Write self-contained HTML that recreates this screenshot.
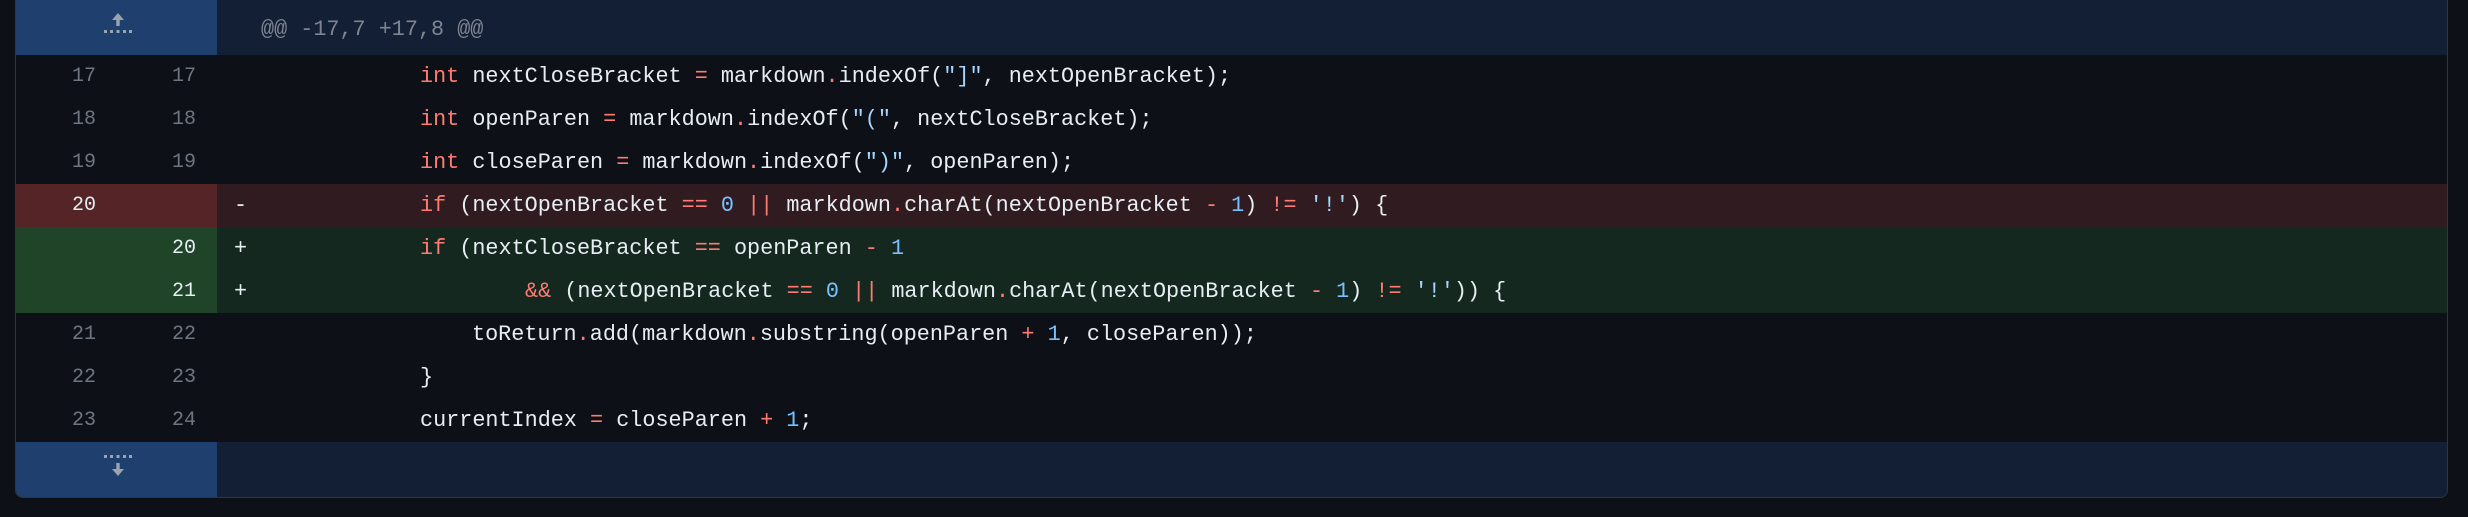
<!DOCTYPE html>
<html><head><meta charset="utf-8"><style>
html,body{margin:0;padding:0;background:#0d1117;width:2468px;height:517px;overflow:hidden}
.box{position:absolute;left:15px;top:-4px;width:2431px;height:501px;border:1px solid #30363d;border-top:none;border-radius:0 0 8px 8px;overflow:hidden;background:#0d1117}
.row{position:absolute;left:0;width:2431px;height:43px;font-family:"Liberation Mono",monospace;font-size:21.8px;line-height:43px;color:#e6edf3;white-space:pre}
.n{position:absolute;top:0;height:43px;text-align:right;color:#6e7681;font-size:20px}
.o{left:0;width:80px}.w{left:80px;width:100px}
.g{position:absolute;left:0;top:0;width:201px;height:100%}
.c{position:absolute;left:201px;top:0;right:0;height:100%}
.s{position:absolute;left:218px}
.t{position:absolute;left:404px}
.i4{left:456px}.i8{left:509px}
.k{color:#ff7b72}.m{color:#79c0ff}.q{color:#a5d6ff}
.del .g{background:#542426}.del .c{background:#301b20}
.add .g{background:#1f4428}.add .c{background:#15281f}
.del .n,.add .n{color:#e6edf3}
.hk{position:absolute;left:0;width:2431px}
.hk .g{background:#1f3f6e}.hk .c{background:#131f35}
</style></head><body>
<div class="box">
<div class="hk" style="top:0;height:59px"><div class="g">
<svg style="position:absolute;left:88px;top:15px" width="28" height="24" viewBox="0 0 28 24"><path d="M14 2 L8 9 H12.3 V15 H15.7 V9 H20 Z" fill="#9aa4b0"/><g fill="#9aa4b0"><rect x="0" y="19" width="3" height="3"/><rect x="6" y="19" width="3" height="3"/><rect x="12.5" y="19" width="3" height="3"/><rect x="19" y="19" width="3" height="3"/><rect x="25" y="19" width="3" height="3"/></g></svg>
</div><div class="c"><span style="position:absolute;left:44px;top:4px;line-height:59px;font-family:'Liberation Mono',monospace;font-size:21.8px;color:#7d8590">@@ -17,7 +17,8 @@</span></div></div>

<div class="row" style="top:59px"><div class="g"><span class="n o">17</span><span class="n w">17</span></div><div class="c"></div><span class="t"><span class="k">int</span> nextCloseBracket <span class="k">=</span> markdown<span class="k">.</span>indexOf(<span class="q">"]"</span>, nextOpenBracket);</span></div>
<div class="row" style="top:102px"><div class="g"><span class="n o">18</span><span class="n w">18</span></div><div class="c"></div><span class="t"><span class="k">int</span> openParen <span class="k">=</span> markdown<span class="k">.</span>indexOf(<span class="q">"("</span>, nextCloseBracket);</span></div>
<div class="row" style="top:145px"><div class="g"><span class="n o">19</span><span class="n w">19</span></div><div class="c"></div><span class="t"><span class="k">int</span> closeParen <span class="k">=</span> markdown<span class="k">.</span>indexOf(<span class="q">")"</span>, openParen);</span></div>
<div class="row del" style="top:188px"><div class="g"><span class="n o">20</span><span class="n w"></span></div><div class="c"></div><span class="s">-</span><span class="t"><span class="k">if</span> (nextOpenBracket <span class="k">==</span> <span class="m">0</span> <span class="k">||</span> markdown<span class="k">.</span>charAt(nextOpenBracket <span class="k">-</span> <span class="m">1</span>) <span class="k">!=</span> <span class="q">'!'</span>) {</span></div>
<div class="row add" style="top:231px"><div class="g"><span class="n o"></span><span class="n w">20</span></div><div class="c"></div><span class="s">+</span><span class="t"><span class="k">if</span> (nextCloseBracket <span class="k">==</span> openParen <span class="k">-</span> <span class="m">1</span></span></div>
<div class="row add" style="top:274px"><div class="g"><span class="n o"></span><span class="n w">21</span></div><div class="c"></div><span class="s">+</span><span class="t i8"><span class="k">&amp;&amp;</span> (nextOpenBracket <span class="k">==</span> <span class="m">0</span> <span class="k">||</span> markdown<span class="k">.</span>charAt(nextOpenBracket <span class="k">-</span> <span class="m">1</span>) <span class="k">!=</span> <span class="q">'!'</span>)) {</span></div>
<div class="row" style="top:317px"><div class="g"><span class="n o">21</span><span class="n w">22</span></div><div class="c"></div><span class="t i4">toReturn<span class="k">.</span>add(markdown<span class="k">.</span>substring(openParen <span class="k">+</span> <span class="m">1</span>, closeParen));</span></div>
<div class="row" style="top:360px"><div class="g"><span class="n o">22</span><span class="n w">23</span></div><div class="c"></div><span class="t">}</span></div>
<div class="row" style="top:403px"><div class="g"><span class="n o">23</span><span class="n w">24</span></div><div class="c"></div><span class="t">currentIndex <span class="k">=</span> closeParen <span class="k">+</span> <span class="m">1</span>;</span></div>

<div class="hk" style="top:446px;height:56px"><div class="g">
<svg style="position:absolute;left:88px;top:12px" width="28" height="24" viewBox="0 0 28 24"><g fill="#9aa4b0"><rect x="0" y="1" width="3" height="3"/><rect x="6" y="1" width="3" height="3"/><rect x="12.5" y="1" width="3" height="3"/><rect x="19" y="1" width="3" height="3"/><rect x="25" y="1" width="3" height="3"/></g><path d="M14 22 L8 15 H12.3 V9 H15.7 V15 H20 Z" fill="#9aa4b0"/></svg>
</div><div class="c"></div></div>
</div>
</body></html>
